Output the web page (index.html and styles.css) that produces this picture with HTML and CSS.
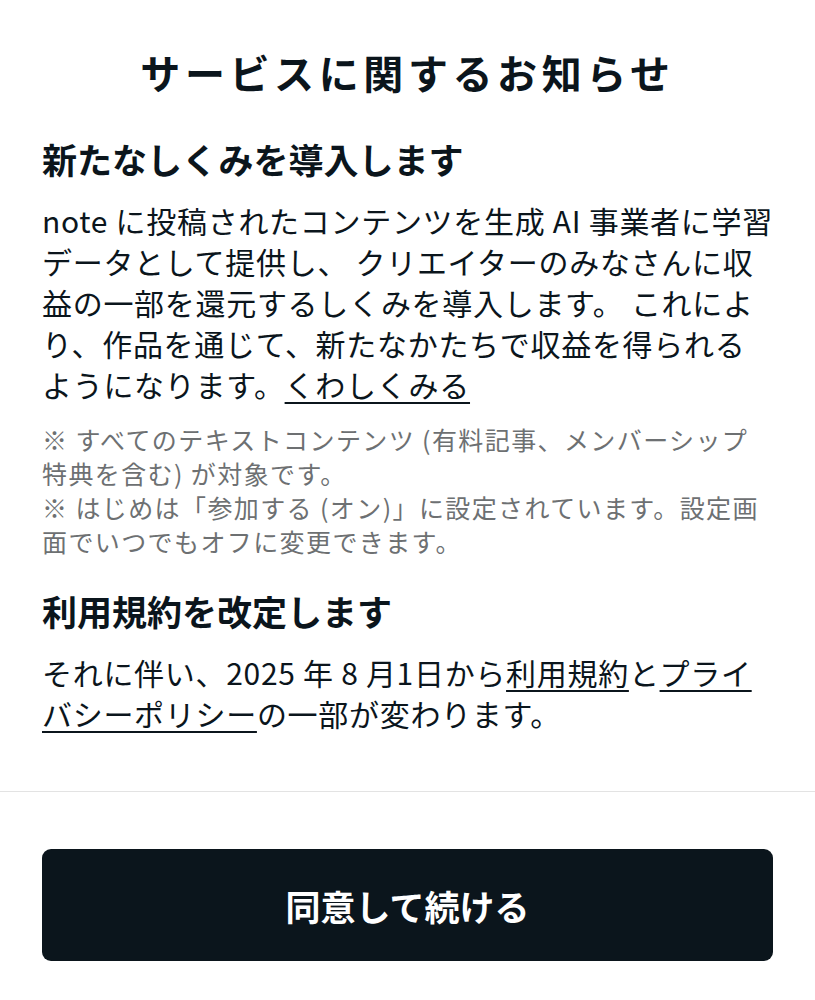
FILE: index.html
```html
<!DOCTYPE html>
<html lang="ja">
<head>
<meta charset="utf-8">
<title>サービスに関するお知らせ</title>
<link rel="stylesheet" href="styles.css">
</head>
<body>
<main class="notice">
  <h1 class="notice-title">サービスに関するお知らせ</h1>

  <section class="block">
    <h2 class="block-heading">新たなしくみを導入します</h2>
    <p class="block-text">note に投稿されたコンテンツを生成 AI 事業者に学習データとして提供し、 クリエイターのみなさんに収益の一部を還元するしくみを導入します。 これにより、作品を通じて、新たなかたちで収益を得られるようになります。<a class="link" href="#">くわしくみる</a></p>
    <div class="notes">
      <p class="note-line">※ すべてのテキストコンテンツ (有料記事、メンバーシップ特典を含む) が対象です。</p>
      <p class="note-line">※ はじめは「参加する (オン)」に設定されています。設定画面でいつでもオフに変更できます。</p>
    </div>
  </section>

  <section class="block block-terms">
    <h2 class="block-heading">利用規約を改定します</h2>
    <p class="block-text">それに伴い、2025 年 8 月1日から<a class="link" href="#">利用規約</a>と<a class="link" href="#">プライバシーポリシー</a>の一部が変わります。</p>
  </section>
</main>

<footer class="actions">
  <button class="agree-button" type="button">同意して続ける</button>
</footer>
</body>
</html>
```

FILE: styles.css
```css
* {
  box-sizing: border-box;
}

html, body {
  margin: 0;
  padding: 0;
  background: #ffffff;
}

body {
  font-family: "Noto Sans CJK JP", "Noto Sans", sans-serif;
  color: #0b151c;
  width: 815px;
}

.notice {
  padding: 42px 42px 0;
}

.notice-title {
  margin: 0;
  font-size: 40px;
  line-height: 60px;
  font-weight: 700;
  text-align: center;
  letter-spacing: 4.6px;
}

.block {
  margin-top: 32px;
}

.block-terms {
  margin-top: 28px;
}

.block-heading {
  margin: 0;
  font-size: 35px;
  line-height: 50px;
  font-weight: 700;
}

.block-text {
  margin: 16px 0 0;
  font-size: 30px;
  line-height: 41px;
  font-weight: 400;
  letter-spacing: 0.7px;
}

.link {
  color: inherit;
  text-decoration: underline;
  text-decoration-thickness: 1.5px;
  text-underline-offset: 5px;
}

.notes {
  margin-top: 17px;
  color: #6d7072;
  font-size: 25px;
  line-height: 34px;
}

.note-line {
  margin: 0;
  letter-spacing: 1.4px;
}

.actions {
  margin-top: 57px;
  border-top: 1px solid #e3e3e3;
  padding: 57px 42px 0;
}

.agree-button {
  display: flex;
  align-items: center;
  justify-content: center;
  width: 100%;
  height: 112px;
  border: none;
  border-radius: 9px;
  background: #0b151c;
  color: #ffffff;
  font-family: "Noto Sans CJK JP", "Noto Sans", sans-serif;
  font-size: 35px;
  font-weight: 700;
  padding: 0;
}
```
